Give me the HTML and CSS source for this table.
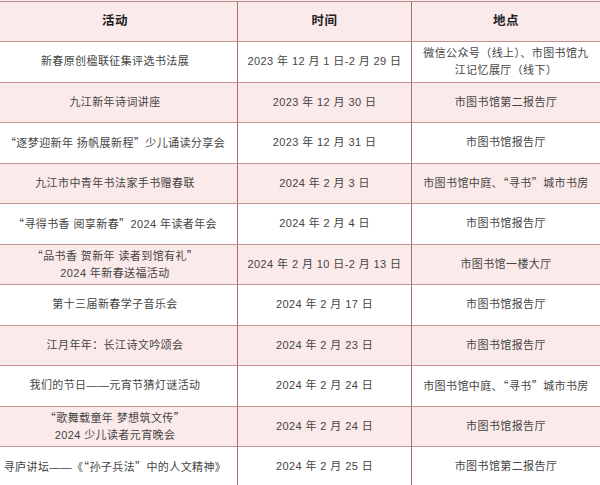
FILE: index.html
```html
<!DOCTYPE html>
<html lang="zh-CN">
<head>
<meta charset="utf-8">
<link rel="stylesheet" href="styles.css">
</head>
<body>
<div class="sheet">
  <div class="row head pink">
    <div class="cell">活动</div>
    <div class="cell">时间</div>
    <div class="cell">地点</div>
  </div>
  <div class="row">
    <div class="cell">新春原创楹联征集评选书法展</div>
    <div class="cell">2023 年 12 月 1 日-2 月 29 日</div>
    <div class="cell">微信公众号（线上）、市图书馆九江记忆展厅（线下）</div>
  </div>
  <div class="row pink">
    <div class="cell">九江新年诗词讲座</div>
    <div class="cell">2023 年 12 月 30 日</div>
    <div class="cell">市图书馆第二报告厅</div>
  </div>
  <div class="row">
    <div class="cell"><span><span class="q">“</span>逐梦迎新年 扬帆展新程<span class="q">”</span>少儿诵读分享会</span></div>
    <div class="cell">2023 年 12 月 31 日</div>
    <div class="cell">市图书馆报告厅</div>
  </div>
  <div class="row pink">
    <div class="cell">九江市中青年书法家手书赠春联</div>
    <div class="cell">2024 年 2 月 3 日</div>
    <div class="cell"><span>市图书馆中庭、<span class="q">“</span>寻书<span class="q">”</span>城市书房</span></div>
  </div>
  <div class="row">
    <div class="cell"><span><span class="q">“</span>寻得书香 阅享新春<span class="q">”</span>2024 年读者年会</span></div>
    <div class="cell">2024 年 2 月 4 日</div>
    <div class="cell">市图书馆报告厅</div>
  </div>
  <div class="row pink">
    <div class="cell"><span><span class="q">“</span>品书香 贺新年 读者到馆有礼<span class="q">”</span><br>2024 年新春送福活动</span></div>
    <div class="cell">2024 年 2 月 10 日-2 月 13 日</div>
    <div class="cell">市图书馆一楼大厅</div>
  </div>
  <div class="row">
    <div class="cell">第十三届新春学子音乐会</div>
    <div class="cell">2024 年 2 月 17 日</div>
    <div class="cell">市图书馆报告厅</div>
  </div>
  <div class="row pink">
    <div class="cell">江月年年：长江诗文吟颂会</div>
    <div class="cell">2024 年 2 月 23 日</div>
    <div class="cell">市图书馆报告厅</div>
  </div>
  <div class="row">
    <div class="cell">我们的节日——元宵节猜灯谜活动</div>
    <div class="cell">2024 年 2 月 24 日</div>
    <div class="cell"><span>市图书馆中庭、<span class="q">“</span>寻书<span class="q">”</span>城市书房</span></div>
  </div>
  <div class="row pink">
    <div class="cell"><span><span class="q">“</span>歌舞载童年 梦想筑文传<span class="q">”</span><br>2024 少儿读者元宵晚会</span></div>
    <div class="cell">2024 年 2 月 24 日</div>
    <div class="cell">市图书馆报告厅</div>
  </div>
  <div class="row">
    <div class="cell nowrap"><span>寻庐讲坛——《<span class="q">“</span>孙子兵法<span class="q">”</span>中的人文精神》</span></div>
    <div class="cell">2024 年 2 月 25 日</div>
    <div class="cell">市图书馆第二报告厅</div>
  </div>
</div>
</body>
</html>
```

FILE: styles.css
```css
html, body {
  margin: 0;
  padding: 0;
  background: #ffffff;
  overflow: hidden;
}

body {
  width: 600px;
  height: 485px;
  font-family: "Liberation Sans", "Noto Sans CJK SC", sans-serif;
  color: #454545;
  font-size: 11px;
  letter-spacing: 0.4px;
}

.sheet {
  margin-left: -7px;
  width: 607px;
  padding-top: 1px;
  background: #fbeaea;
}

.row {
  display: grid;
  grid-template-columns: 244px 174px 189px;
  height: 40.5px;
  box-sizing: border-box;
  border-bottom: 1px solid #c29294;
  background: #ffffff;
}

.row.pink {
  background: #fbeaea;
}

.row.head {
  height: 41px;
  border-top: 1px solid #b98a8c;
  font-size: 12.5px;
  font-weight: bold;
  color: #222222;
  letter-spacing: 0.6px;
}

.cell {
  display: flex;
  align-items: center;
  justify-content: center;
  text-align: center;
  padding: 0 6px;
  line-height: 17px;
}

.cell + .cell {
  border-left: 1px solid #a86c6f;
}

.q {
  font-family: "Noto Sans CJK SC", sans-serif;
}

.nowrap {
  white-space: nowrap;
  padding: 0;
}
```
